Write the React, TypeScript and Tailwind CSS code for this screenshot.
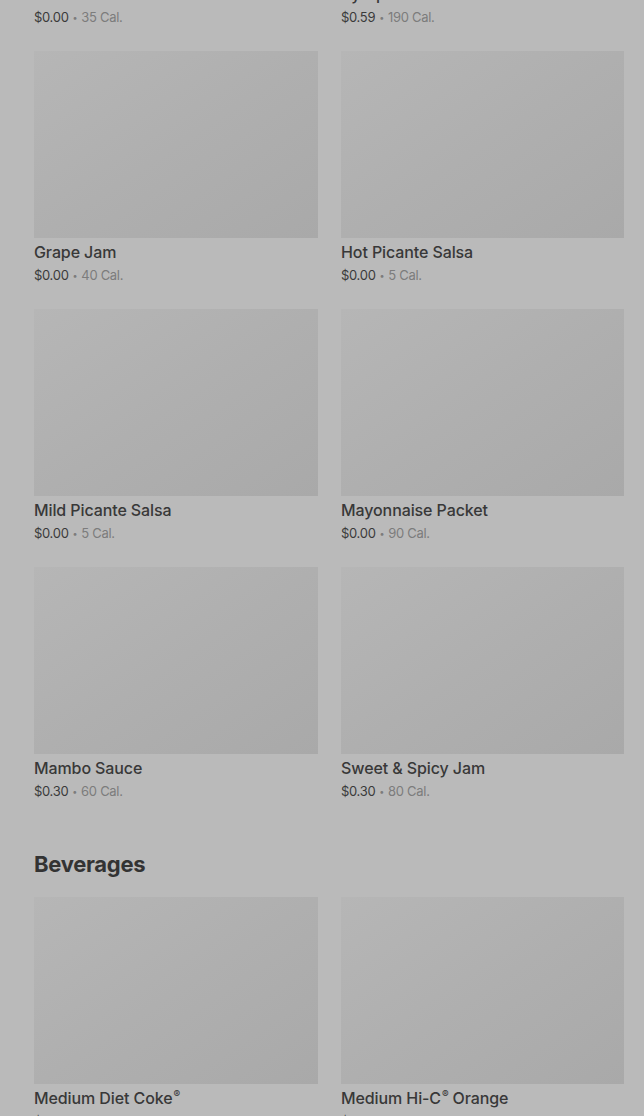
import React from "react";

type Item = { name: React.ReactNode; price: string; cal: string };

const Reg = () => (
  <span className="text-[10px] leading-none self-start mt-[1px] ml-[1px]">®</span>
);

const rows1: Item[] = [
  { name: "Butter", price: "$0.00", cal: "35 Cal." },
  { name: "Syrup", price: "$0.59", cal: "190 Cal." },
  { name: "Grape Jam", price: "$0.00", cal: "40 Cal." },
  { name: "Hot Picante Salsa", price: "$0.00", cal: "5 Cal." },
  { name: "Mild Picante Salsa", price: "$0.00", cal: "5 Cal." },
  { name: "Mayonnaise Packet", price: "$0.00", cal: "90 Cal." },
  { name: "Mambo Sauce", price: "$0.30", cal: "60 Cal." },
  { name: "Sweet & Spicy Jam", price: "$0.30", cal: "80 Cal." },
];

const rows2: Item[] = [
  {
    name: (
      <>
        <span>Medium Diet Coke</span>
        <Reg />
      </>
    ),
    price: "$2.29",
    cal: "0 Cal.",
  },
  {
    name: (
      <>
        <span>Medium Hi-C</span>
        <Reg />
        <span className="ml-[4px]">Orange</span>
      </>
    ),
    price: "$2.29",
    cal: "230 Cal.",
  },
];

function Card({ item }: { item: Item }) {
  return (
    <div className="flex flex-col">
      <div className="h-[187px] bg-gradient-to-br from-[#b6b6b6] via-[#afafaf] to-[#a9a9a9]" />
      <div className="mt-[4px] h-[20px] flex items-center text-[16px] leading-[20px] font-medium text-[#383838] tracking-[-0.1px] whitespace-nowrap">
        {item.name}
      </div>
      <div className="mt-[3px] h-[20px] flex items-center text-[13px] leading-[20px] whitespace-nowrap tracking-[-0.3px]">
        <span className="text-[#3a3a3a]">{item.price}</span>
        <span className="text-[#7c7c7c] text-[9px] leading-none mx-[4px]">•</span>
        <span className="text-[#7c7c7c]">{item.cal}</span>
      </div>
    </div>
  );
}

export default function App() {
  return (
    <div
      className="w-[644px] h-[1116px] overflow-hidden bg-[#bababa]"
      style={{ fontFamily: "Inter, 'Noto Sans', sans-serif" }}
    >
      <div className="mt-[-207px] pl-[34px] pr-[20px]">
        <div className="grid grid-cols-[284px_283px] gap-x-[23px] gap-y-[24px]">
          {rows1.map((it, i) => (
            <Card key={i} item={it} />
          ))}
        </div>
        <h2 className="mt-[49px] text-[22px] leading-[28px] font-bold text-[#333333] tracking-[-0.3px]">
          Beverages
        </h2>
        <div className="mt-[19px] grid grid-cols-[284px_283px] gap-x-[23px] gap-y-[24px]">
          {rows2.map((it, i) => (
            <Card key={i} item={it} />
          ))}
        </div>
      </div>
    </div>
  );
}
